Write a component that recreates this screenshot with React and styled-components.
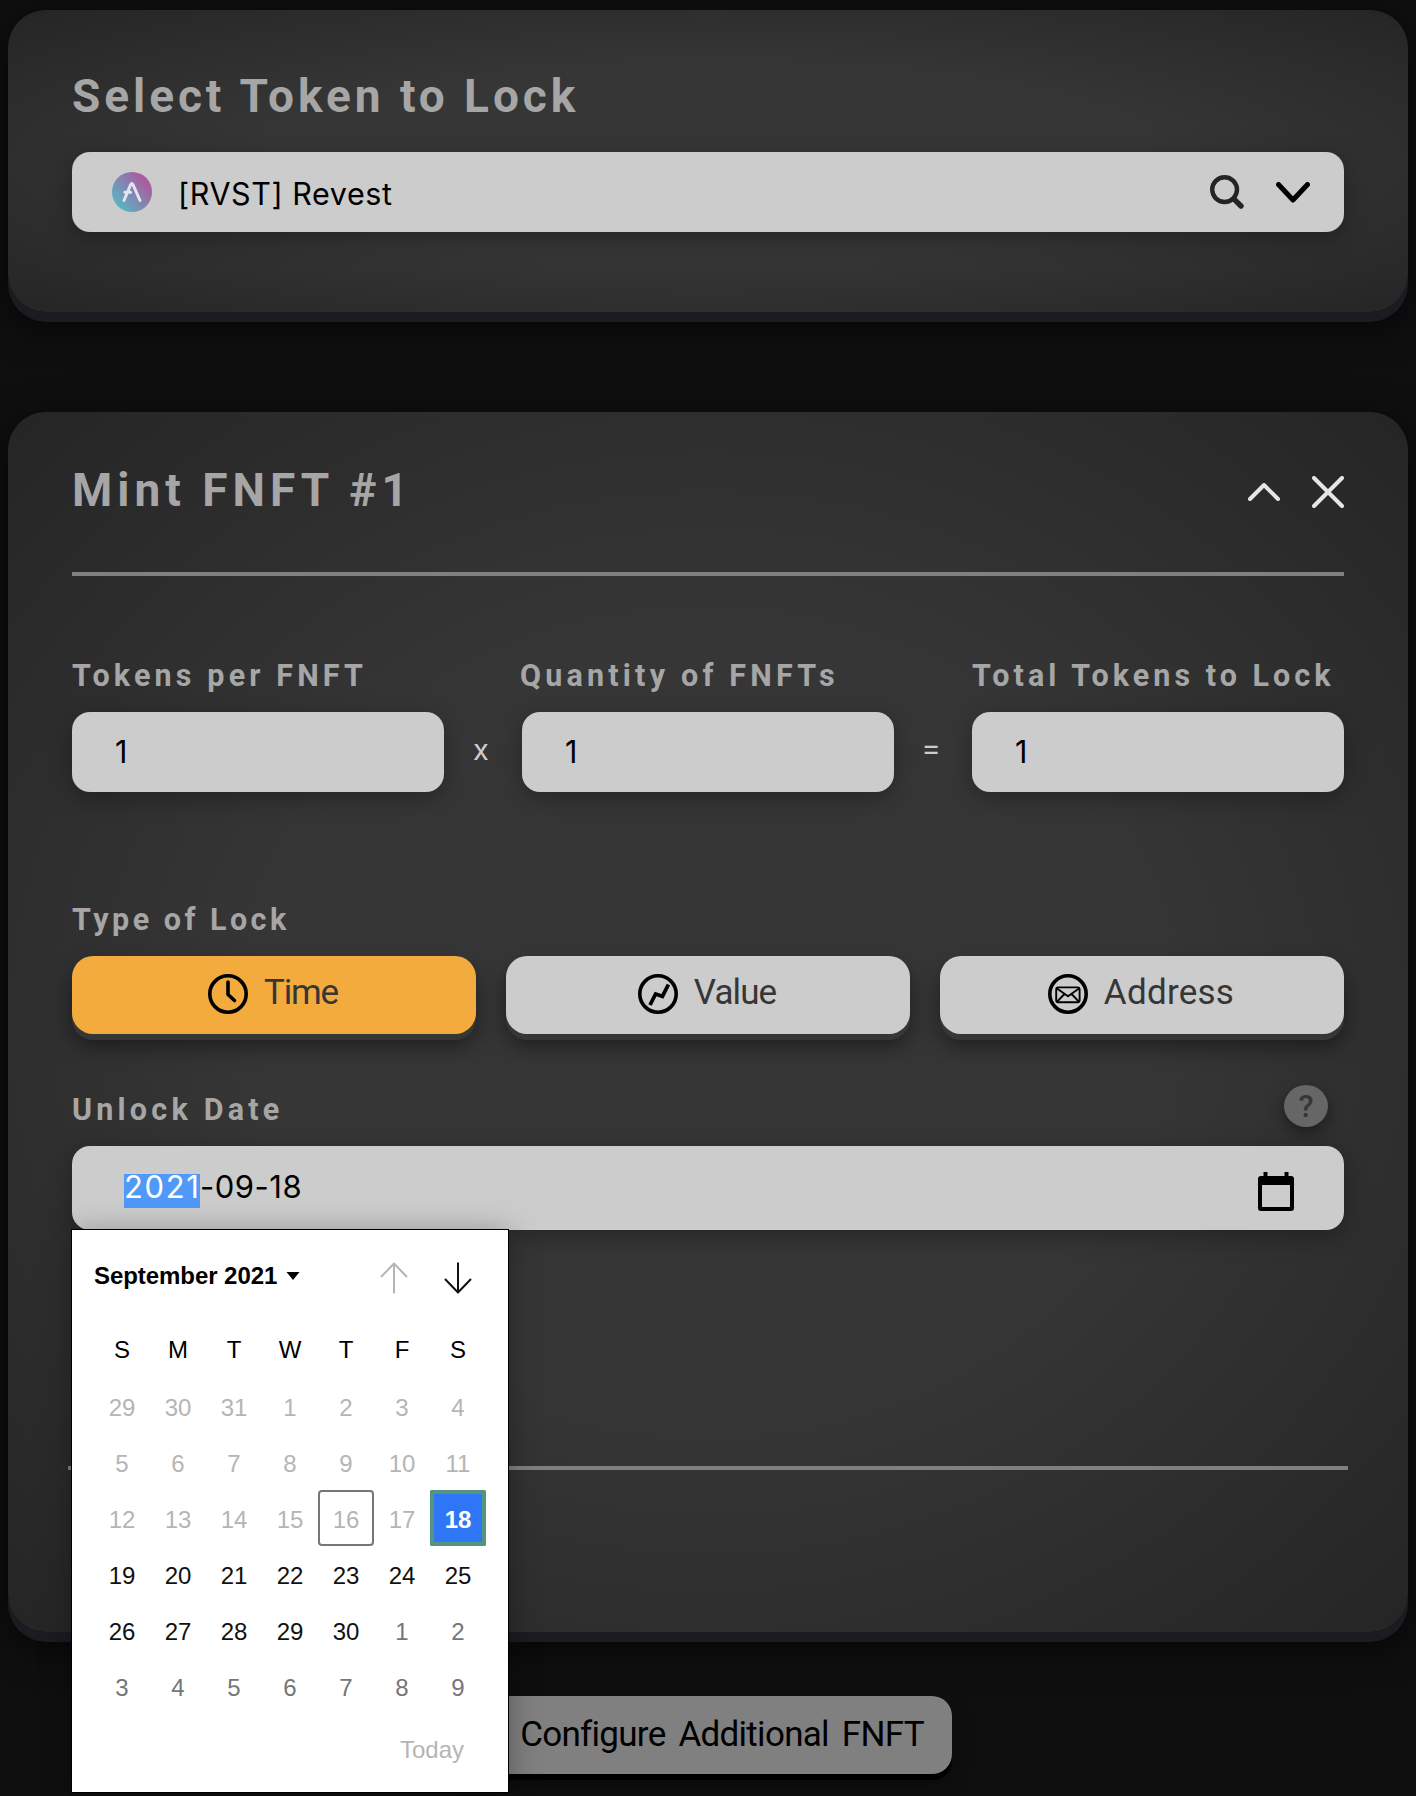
import React from "react";
import styled, { createGlobalStyle, css } from "styled-components";

const Global = createGlobalStyle`
  *, *::before, *::after { box-sizing: border-box; }
  html, body { margin: 0; background: #0f0f0f; }
  body {
    height: 1796px;
    overflow: hidden;
    font-family: Roboto, "Liberation Sans", sans-serif;
  }
  svg { display: block; flex: none; }
`;

const Page = styled.main`
  display: flex;
  flex-direction: column;
  width: 1416px;
  height: 1796px;
  padding: 10px 8px 0;
`;

const Card = styled.section`
  display: flex;
  flex-direction: column;
  padding: ${(p) => p.$pad};
  margin-bottom: ${(p) => p.$after}px;
  border-radius: 38px;
  background: radial-gradient(ellipse at center, #363636 0%, #363636 45%, #252525 100%);
  box-shadow: 0 10px 0 #1c1b22, 0 12px 40px rgba(0, 0, 0, 0.75);
`;

const Title = styled.h2`
  margin: 0;
  color: #a6a6a6;
  font-size: 46px;
  font-weight: 700;
  line-height: 60px;
  letter-spacing: ${(p) => p.$ls}px;
  white-space: nowrap;
`;

const Label = styled.div`
  margin-left: ${(p) => p.$shift || 0}px;
  color: #a6a6a6;
  font-size: 30.5px;
  font-weight: 700;
  line-height: 40px;
  letter-spacing: ${(p) => p.$ls}px;
  white-space: nowrap;
`;

const panel = css`
  display: flex;
  border-radius: 18px;
  background: #cccccc;
  color: #000;
  font-family: Inter, "Liberation Sans", sans-serif;
  font-size: 30.5px;
  box-shadow: 0 6px 24px rgba(0, 0, 0, 0.3);
`;

const TokenSelect = styled.div`
  ${panel}
  align-items: center;
  height: 80px;
  margin-top: 26px;
  padding: 0 34px 0 40px;
`;

const TokenName = styled.span`
  flex: 1;
  padding: 2px 0 0 26px;
  letter-spacing: 0.58px;
`;

const Chevron = styled.span`
  display: flex;
  margin-left: 32px;
`;

const CardHeader = styled.header`
  display: flex;
  align-items: center;
  justify-content: space-between;
`;

const HeaderIcons = styled.div`
  display: flex;
  align-items: center;
  gap: 32px;
  padding-top: 4px;
`;

const Rule = styled.hr`
  width: auto;
  height: 4px;
  margin: ${(p) => p.$margin};
  border: 0;
  background: #808080;
`;

const Amounts = styled.div`
  display: grid;
  grid-template-columns: 372px 78px 372px 78px 372px;
  row-gap: 16px;
`;

const NumberBox = styled.div`
  ${panel}
  align-items: center;
  height: 80px;
  padding: 0 0 2px 43px;
`;

const Operator = styled.span`
  display: flex;
  justify-content: center;
  padding: ${(p) => p.$pad};
  color: #cccccc;
  font-family: Inter, "Liberation Sans", sans-serif;
  font-size: 29px;
  line-height: 36px;
`;

const LockSection = styled.div`
  margin-top: 108px;
`;

const LockTypes = styled.div`
  display: grid;
  grid-template-columns: repeat(3, 404px);
  justify-content: space-between;
  margin: 16px 0 56px;
`;

const LockButton = styled.button`
  display: flex;
  align-items: center;
  justify-content: center;
  gap: 16px;
  height: 78px;
  padding: 0 2px 2px 0;
  border: 0;
  border-radius: 21px;
  background: ${(p) => (p.$active ? "#f3ab3d" : "#cccccc")};
  box-shadow: 0 6px 0 #363636, 0 12px 22px rgba(0, 0, 0, 0.45);
  color: #363636;
  font-family: inherit;
  font-size: 35px;
  letter-spacing: ${(p) => p.$ls}px;
`;

const ButtonText = styled.span`
  padding-bottom: 4px;
`;

const DateHeader = styled.div`
  display: flex;
  justify-content: space-between;
  height: 40px;
  padding-right: 16px;
`;

const Help = styled.span`
  display: flex;
  align-items: center;
  justify-content: center;
  width: 44px;
  height: 42px;
  margin-top: -5px;
  border-radius: 50%;
  background: #666;
  box-shadow: 0 6px 16px rgba(0, 0, 0, 0.4);
  color: #363636;
  font-size: 31px;
  font-weight: 500;
`;

const DateField = styled.div`
  ${panel}
  position: relative;
  height: 84px;
  margin-top: 16px;
  padding: 28px 50px 0 52px;
`;

const DateText = styled.div`
  display: flex;
  flex: 1;
  line-height: 25px;
  font-size: 31px;
  letter-spacing: 0.5px;
`;

const YearPart = styled.span`
  width: 76px;
  height: 34px;
  background: #5099f8;
  color: #fff;
  letter-spacing: 1.6px;
`;

const CalendarGlyph = styled.span`
  display: flex;
  margin-top: -2px;
`;

const Popup = styled.div`
  position: absolute;
  z-index: 2;
  top: 84px;
  left: 0;
  width: 436px;
  height: 562px;
  padding: 0 22px;
  background: #fff;
  box-shadow: 0 0 0 1px #000, 0 4px 30px rgba(0, 0, 0, 0.35);
  color: #000;
  font-family: "Liberation Sans", Arial, sans-serif;
  font-size: 24px;
`;

const PopupHeader = styled.div`
  display: flex;
  align-items: center;
  height: 92px;
`;

const Month = styled.strong`
  letter-spacing: -0.06px;
`;

const MonthArrow = styled.span`
  display: flex;
  padding: 0 80px 0 9px;
`;

const Arrows = styled.div`
  display: flex;
  gap: 36px;
  padding-top: 4px;
`;

const Week = styled.div`
  display: grid;
  grid-template-columns: repeat(7, 56px);
`;

const WeekdayCell = styled.span`
  display: flex;
  align-items: center;
  justify-content: center;
  height: 56px;
  padding-bottom: 1px;
`;

const dayColors = { off: "#b5b5b5", on: "#111", next: "#767676", today: "#b5b5b5", picked: "#fff" };

const Day = styled.span`
  display: flex;
  align-items: center;
  justify-content: center;
  height: 56px;
  padding-top: 3px;
  color: ${(p) => dayColors[p.$kind]};
  ${(p) => p.$kind === "today" && css`
    border-radius: 4px;
    box-shadow: inset 0 0 0 2px #767676;
  `}
  ${(p) => p.$kind === "picked" && css`
    border-radius: 2px;
    background: #2f76f6;
    box-shadow: inset 0 0 0 4px #549580;
    font-weight: 700;
  `}
`;

const TodayLink = styled.div`
  padding: 20px 22px 0 0;
  color: #b5b5b5;
  line-height: 32px;
  text-align: right;
`;

const AddButton = styled.button`
  align-self: center;
  width: 488px;
  height: 78px;
  padding: 0 0 2px 28px;
  border: 0;
  border-radius: 20px;
  background: #808080;
  box-shadow: 0 6px 0 #000, 0 8px 20px rgba(0, 0, 0, 0.4);
  color: #000;
  font-family: inherit;
  font-size: 35px;
  letter-spacing: -0.72px;
  word-spacing: 5px;
  white-space: nowrap;
`;

const Stroke = ({ w, h, width = 4, color = "#000", children }) => (
  <svg width={w} height={h} viewBox={`0 0 ${w} ${h}`} fill="none" stroke={color}
    strokeWidth={width} strokeLinecap="round" strokeLinejoin="round">
    {children}
  </svg>
);

const TokenLogo = () => (
  <svg width="40" height="40" viewBox="0 0 40 40" fill="none">
    <defs>
      <linearGradient id="token" x1="0.12" y1="0.85" x2="0.88" y2="0.15">
        <stop offset="0" stopColor="#56b6c5" />
        <stop offset="1" stopColor="#b1549b" />
      </linearGradient>
    </defs>
    <circle cx="20" cy="20" r="20" fill="url(#token)" />
    <path d="M12 28.5 L18.6 12.6 Q19.8 10.4 21 12.6 L28 28.5 M12.8 20.2 H18.6" stroke="#e4e4ee" strokeWidth="3" strokeLinecap="round" />
  </svg>
);

const SearchIcon = () => (
  <Stroke w={34} h={34} width={4.4} color="#242424">
    <circle cx="14.6" cy="14.6" r="12.4" />
    <path d="M24.8 24.8 L31 31" strokeWidth="5.4" />
  </Stroke>
);

const ClockIcon = () => (
  <Stroke w={40} h={40} width={3.6}>
    <circle cx="20" cy="20" r="18.2" />
    <path d="M20 8 V20.5 L26.5 26.5" />
  </Stroke>
);

const ValueIcon = () => (
  <svg width="40" height="40" viewBox="0 0 40 40" fill="none" stroke="#000">
    <circle cx="20" cy="20" r="18.2" strokeWidth="3.6" />
    <path d="M12 31 L17.6 20 L24.4 22.4 L30.4 10.5" strokeWidth="3.8" />
  </svg>
);

const MailIcon = () => (
  <Stroke w={40} h={40} width={1.9}>
    <circle cx="20" cy="20" r="18.2" strokeWidth="3.6" />
    <rect x="8.2" y="13.4" width="23.4" height="14.8" rx="2" />
    <path d="M9 14.4 L20 22.2 L31 14.4 M9.4 27.4 L16.4 20 M30.6 27.4 L23.6 20" />
  </Stroke>
);

const CalendarIcon = () => (
  <svg width="36" height="40" viewBox="0 0 36 40">
    <path fillRule="evenodd" d="M5.5 0 H9.5 V4 H26.5 V0 H30.5 V4 H33 Q36 4 36 7 V36 Q36 39 33 39 H3 Q0 39 0 36 V7 Q0 4 3 4 H5.5 Z M4 13 V35 H32 V13 Z" />
  </svg>
);

const WEEKS = [
  [[29, "off"], [30, "off"], [31, "off"], [1, "off"], [2, "off"], [3, "off"], [4, "off"]],
  [[5, "off"], [6, "off"], [7, "off"], [8, "off"], [9, "off"], [10, "off"], [11, "off"]],
  [[12, "off"], [13, "off"], [14, "off"], [15, "off"], [16, "today"], [17, "off"], [18, "picked"]],
  [[19, "on"], [20, "on"], [21, "on"], [22, "on"], [23, "on"], [24, "on"], [25, "on"]],
  [[26, "on"], [27, "on"], [28, "on"], [29, "on"], [30, "on"], [1, "next"], [2, "next"]],
  [[3, "next"], [4, "next"], [5, "next"], [6, "next"], [7, "next"], [8, "next"], [9, "next"]],
];

const DatePopup = () => (
  <Popup>
    <PopupHeader>
      <Month>September 2021</Month>
      <MonthArrow>
        <svg width="14" height="8" viewBox="0 0 14 8"><path d="M0.5 0 H13.5 L7 8 Z" /></svg>
      </MonthArrow>
      <Arrows>
        <Stroke w={28} h={32} width={2} color="#b5b5b5">
          <path d="M14 31.5 V1.5 M1 15 L14 1.5 L27 15" strokeLinecap="butt" />
        </Stroke>
        <Stroke w={28} h={32} width={2} color="#111">
          <path d="M14 0.5 V30.5 M1 17 L14 30.5 L27 17" strokeLinecap="butt" />
        </Stroke>
      </Arrows>
    </PopupHeader>
    <Week>
      {["S", "M", "T", "W", "T", "F", "S"].map((d, i) => <WeekdayCell key={i}>{d}</WeekdayCell>)}
    </Week>
    {WEEKS.map((week, w) => (
      <Week key={w}>
        {week.map(([n, kind]) => <Day key={n} $kind={kind}>{n}</Day>)}
      </Week>
    ))}
    <TodayLink>Today</TodayLink>
  </Popup>
);

export default function App() {
  return (
    <Page>
      <Global />
      <Card $pad="56px 64px 80px" $after={100}>
        <Title $ls={3.94}>Select Token to Lock</Title>
        <TokenSelect>
          <TokenLogo />
          <TokenName>[RVST] Revest</TokenName>
          <SearchIcon />
          <Chevron>
            <Stroke w={34} h={21} width={5}><path d="M2.5 2.5 L17 18 L31.5 2.5" /></Stroke>
          </Chevron>
        </TokenSelect>
      </Card>

      <Card $pad="48px 64px 162px" $after={64}>
        <CardHeader>
          <Title $ls={5}>Mint FNFT #1</Title>
          <HeaderIcons>
            <Stroke w={32} h={18} color="#e6e6e6"><path d="M2 16 L16 2 L30 16" /></Stroke>
            <Stroke w={32} h={32} color="#e6e6e6"><path d="M2 2 L30 30 M30 2 L2 30" /></Stroke>
          </HeaderIcons>
        </CardHeader>
        <Rule $margin="52px 0 80px" />

        <Amounts>
          <Label $ls={4.14}>Tokens per FNFT</Label>
          <span />
          <Label $ls={4.2} $shift={-2}>Quantity of FNFTs</Label>
          <span />
          <Label $ls={4.03}>Total Tokens to Lock</Label>
          <NumberBox>1</NumberBox>
          <Operator $pad="20px 4px 0 0">x</Operator>
          <NumberBox>1</NumberBox>
          <Operator $pad="18px 4px 0 0">=</Operator>
          <NumberBox>1</NumberBox>
        </Amounts>

        <LockSection>
          <Label $ls={3.49}>Type of Lock</Label>
          <LockTypes>
            <LockButton $active $ls={-1.2}><ClockIcon /><ButtonText>Time</ButtonText></LockButton>
            <LockButton $ls={-0.9}><ValueIcon /><ButtonText>Value</ButtonText></LockButton>
            <LockButton $ls={0.26}><MailIcon /><ButtonText>Address</ButtonText></LockButton>
          </LockTypes>
        </LockSection>

        <DateHeader>
          <Label $ls={4.2}>Unlock Date</Label>
          <Help>?</Help>
        </DateHeader>
        <DateField>
          <DateText><YearPart>2021</YearPart>-09-18</DateText>
          <CalendarGlyph><CalendarIcon /></CalendarGlyph>
          <DatePopup />
        </DateField>
        <Rule $margin="236px -4px 0" />
      </Card>

      <AddButton>Configure Additional FNFT</AddButton>
    </Page>
  );
}
